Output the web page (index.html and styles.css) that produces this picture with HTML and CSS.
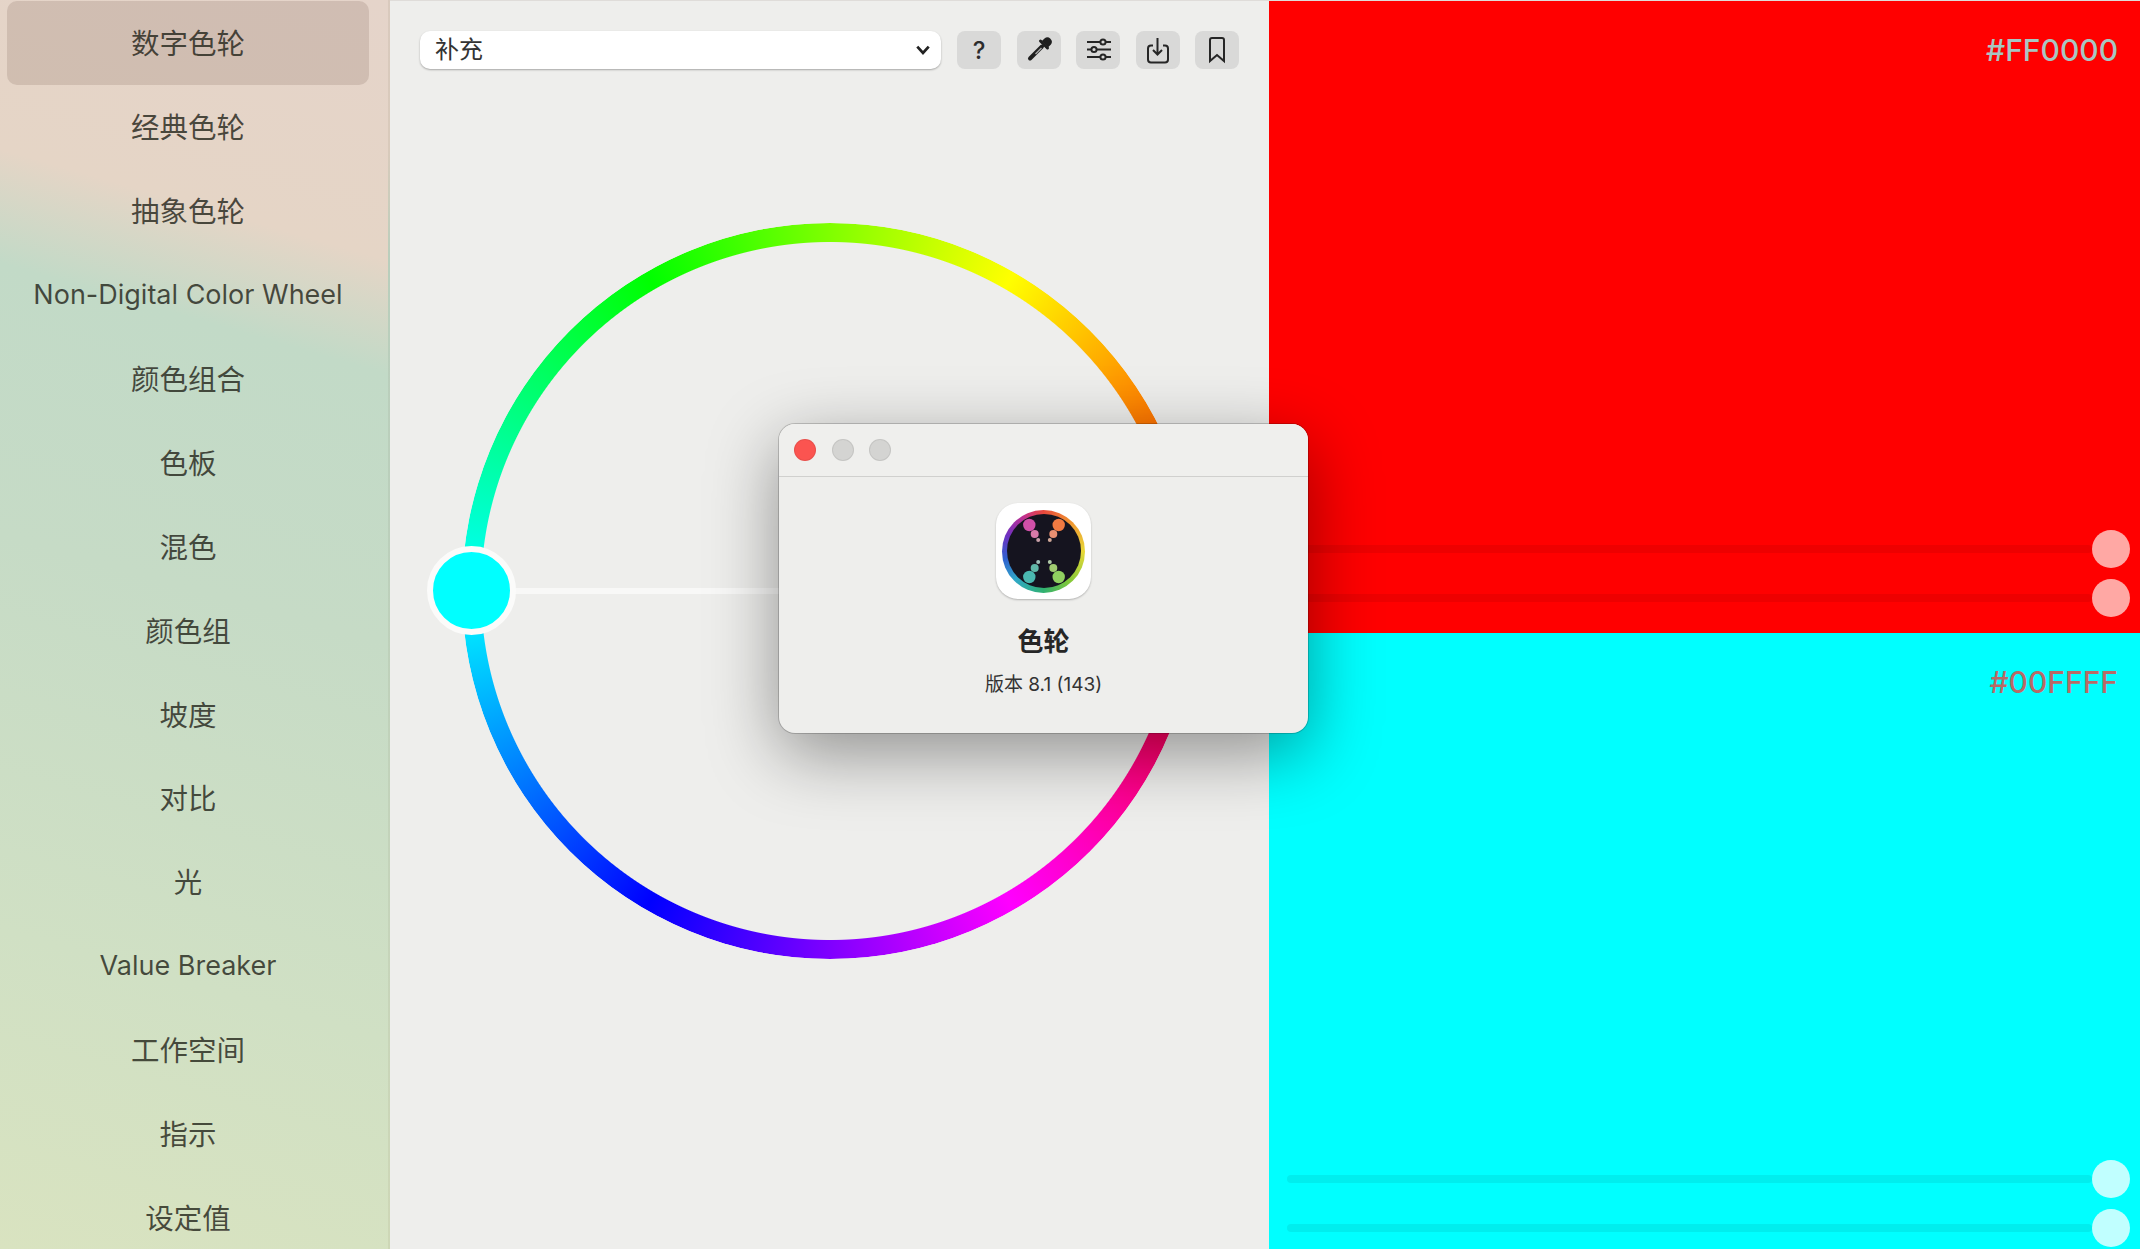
FILE: index.html
```html
<!DOCTYPE html>
<html lang="zh-CN">
<head>
  <meta charset="UTF-8" />
  <title>色轮</title>
  <link rel="stylesheet" href="styles.css">
</head>
<body>
  <div class="app">
    <nav class="sidebar">
      <a class="nav-item active">数字色轮</a>
      <a class="nav-item">经典色轮</a>
      <a class="nav-item">抽象色轮</a>
      <a class="nav-item latin">Non-Digital Color Wheel</a>
      <a class="nav-item">颜色组合</a>
      <a class="nav-item">色板</a>
      <a class="nav-item">混色</a>
      <a class="nav-item">颜色组</a>
      <a class="nav-item">坡度</a>
      <a class="nav-item">对比</a>
      <a class="nav-item">光</a>
      <a class="nav-item latin">Value Breaker</a>
      <a class="nav-item">工作空间</a>
      <a class="nav-item">指示</a>
      <a class="nav-item">设定值</a>
    </nav>

    <main class="main">
      <div class="toolbar">
        <div class="select-wrap">
          <select class="mode-select">
            <option>补充</option>
          </select>
          <svg class="chevron" viewBox="0 0 14 10"><path d="M2 2l5 5.5L12 2" /></svg>
        </div>
        <button class="tool-btn">?</button>
        <button class="tool-btn">
          <svg viewBox="0 0 44 38">
            <path class="fill" d="M27.5 7.5a4.4 4.4 0 0 1 6.2 6.2l-2.6 2.6-6.2-6.2z" />
            <path class="thick" d="M23.5 10l7 7" />
            <path class="stem" d="M25 15.5L13 27.5" />
            <path class="stem-in" d="M24.5 17l-6 6" />
          </svg>
        </button>
        <button class="tool-btn">
          <svg viewBox="0 0 44 38">
            <path class="line" d="M11 11h24M11 18.5h24M11 26h24" />
            <circle class="knob-ico" cx="27" cy="11" r="2.6" />
            <circle class="knob-ico" cx="18" cy="18.5" r="2.6" />
            <circle class="knob-ico" cx="27" cy="26" r="2.6" />
          </svg>
        </button>
        <button class="tool-btn">
          <svg viewBox="0 0 44 38">
            <path class="line" d="M17 14.5h-2a3 3 0 0 0-3 3v11a3 3 0 0 0 3 3h14a3 3 0 0 0 3-3v-11a3 3 0 0 0-3-3h-2" />
            <path class="line" d="M21.5 7v16.5M17 19l4.5 4.5L26 19" />
          </svg>
        </button>
        <button class="tool-btn">
          <svg viewBox="0 0 44 38">
            <path class="line" d="M15 30V9a2 2 0 0 1 2-2h10a2 2 0 0 1 2 2v21l-7-6z" />
          </svg>
        </button>
      </div>

      <div class="wheel">
        <div class="wheel-ring"></div>
        <div class="wheel-line"></div>
        <div class="wheel-knob"></div>
      </div>
    </main>

    <section class="swatches">
      <div class="swatch swatch-red">
        <div class="hex">#FF0000</div>
        <div class="sliders">
          <div class="slider"><div class="track"></div><div class="thumb"></div></div>
          <div class="slider"><div class="track"></div><div class="thumb"></div></div>
        </div>
      </div>
      <div class="swatch swatch-cyan">
        <div class="hex">#00FFFF</div>
        <div class="sliders">
          <div class="slider"><div class="track"></div><div class="thumb"></div></div>
          <div class="slider"><div class="track"></div><div class="thumb"></div></div>
        </div>
      </div>
    </section>

    <!-- About window -->
    <div class="about">
      <div class="titlebar">
        <span class="light light-close"></span>
        <span class="light"></span>
        <span class="light"></span>
      </div>
      <div class="about-body">
        <div class="app-icon">
          <div class="icon-ring">
            <svg class="icon-disc" viewBox="0 0 74 74">
              <circle cx="37" cy="37" r="37" fill="#15141f" />
              <circle cx="22.3" cy="11" r="6.2" fill="#d050a8" />
              <circle cx="51.7" cy="11" r="6.2" fill="#f07a42" />
              <circle cx="27.7" cy="20" r="4" fill="#d87aa8" />
              <circle cx="46.3" cy="20" r="4" fill="#e89072" />
              <circle cx="31.2" cy="26" r="2" fill="#c8a0a8" />
              <circle cx="42.8" cy="26" r="2" fill="#d0a898" />
              <circle cx="31.2" cy="48" r="2" fill="#9fc0b8" />
              <circle cx="42.8" cy="48" r="2" fill="#b0c8a8" />
              <circle cx="27.7" cy="54" r="4" fill="#60b8a8" />
              <circle cx="46.3" cy="54" r="4" fill="#a0cc70" />
              <circle cx="22.3" cy="63" r="6.2" fill="#4ab8b0" />
              <circle cx="51.7" cy="63" r="6.2" fill="#90d060" />
            </svg>
          </div>
        </div>
        <div class="about-name">色轮</div>
        <div class="about-version">版本 8.1 (143)</div>
      </div>
    </div>
  </div>
</body>
</html>
```

FILE: styles.css
```css
* {
  box-sizing: border-box;
}

html, body {
  margin: 0;
  height: 100%;
  overflow: hidden;
}

body {
  font-family: Inter, "Noto Sans CJK SC", sans-serif;
  background: #eeeeec;
}

.app {
  position: relative;
  display: flex;
  height: 1249px;
  overflow: hidden;
}

/* Sidebar */
.sidebar {
  width: 390px;
  flex-shrink: 0;
  padding: 1px 19px 0 7px;
  border-right: 2px solid rgba(0, 0, 0, 0.05);
  background: linear-gradient(196deg, #e5d4ca 0, #e5d5c6 250px, #c2dac7 360px, #c6dbc6 620px, #d0e0c4 1000px, #d9e3c0 1308px);
  overflow: hidden;
}

.nav-item {
  display: flex;
  align-items: center;
  justify-content: center;
  height: 83.9px;
  padding-bottom: 2px;
  font-size: 28.5px;
  color: rgba(30, 32, 22, 0.78);
  white-space: nowrap;
}

.nav-item.latin {
  padding-bottom: 0;
  font-size: 27px;
}

.nav-item.active {
  background: rgba(90, 60, 50, 0.15);
  border-radius: 10px;
}

/* Wheel panel */
.main {
  width: 879px;
  flex-shrink: 0;
  border-top: 1px solid #dfdcd9;
  background: #eeeeec;
}

.toolbar {
  display: flex;
  align-items: center;
  gap: 15.5px;
  height: 38px;
  margin: 30px 0 0 30px;
}

.select-wrap {
  position: relative;
  width: 521px;
  height: 38px;
  margin-right: 0.5px;
}

.mode-select {
  width: 100%;
  height: 100%;
  padding: 0 15px 2px;
  font-family: inherit;
  font-size: 24px;
  color: #333;
  background: #fff;
  border: none;
  border-radius: 10px;
  box-shadow: 0 1px 2px rgba(0, 0, 0, 0.3);
  appearance: none;
  -webkit-appearance: none;
}

.chevron {
  position: absolute;
  top: 13px;
  right: 10px;
  width: 16px;
  height: 12px;
  fill: none;
  stroke: #222;
  stroke-width: 2.4;
}

.tool-btn {
  display: flex;
  align-items: center;
  justify-content: center;
  width: 44px;
  height: 38px;
  padding: 0;
  font-family: inherit;
  font-size: 24px;
  font-weight: 500;
  color: #2c2c2c;
  background: #d9d9d8;
  border: none;
  border-radius: 8px;
}

.tool-btn svg {
  display: block;
  width: 44px;
  height: 38px;
}

.line {
  fill: none;
  stroke: #262626;
  stroke-width: 2;
}

.fill {
  fill: #1f1f1f;
}

.thick {
  stroke: #1f1f1f;
  stroke-width: 3;
  stroke-linecap: round;
}

.stem {
  stroke: #1f1f1f;
  stroke-width: 4;
  stroke-linecap: round;
}

.stem-in {
  stroke: #a8a8a8;
  stroke-width: 1.5;
}

.knob-ico {
  fill: #d9d9d8;
  stroke: #262626;
  stroke-width: 2;
}

.wheel {
  position: relative;
  width: 736px;
  height: 736px;
  margin: 154px 0 0 72px;
}

.wheel-ring {
  width: 100%;
  height: 100%;
  border-radius: 50%;
  background: conic-gradient(hsl(90, 100%, 50%), hsl(60, 100%, 50%) 30deg, hsl(0, 100%, 50%) 90deg, hsl(300, 100%, 50%) 150deg, hsl(240, 100%, 50%) 210deg, hsl(180, 100%, 50%) 270deg, hsl(120, 100%, 50%) 330deg, hsl(90, 100%, 50%) 360deg);
  -webkit-mask: radial-gradient(circle closest-side, transparent 348.5px, #000 349.5px);
  mask: radial-gradient(circle closest-side, transparent 348.5px, #000 349.5px);
}

.wheel-line {
  position: absolute;
  left: 50px;
  top: 365px;
  width: 318px;
  height: 6px;
  background: #f8f8f7;
}

.wheel-knob {
  position: absolute;
  left: -35px;
  top: 323px;
  width: 89px;
  height: 89px;
  background: #00ffff;
  border: 6px solid #fbfbfa;
  border-radius: 50%;
}

/* Colour swatches */
.swatches {
  display: flex;
  flex-direction: column;
  flex: 1;
  height: 1263px;
  border-top: 1px solid #dfdcd9;
}

.swatch {
  display: flex;
  flex-direction: column;
  flex: 1;
  padding: 30px 10px 11px 18px;
}

.swatch-red {
  flex: 0 0 632px;
  background: #ff0000;
}

.swatch-red .hex {
  color: #a8c6c2;
}

.swatch-red .track {
  background: #ee0000;
}

.swatch-red .thumb {
  background: #ffa8a4;
}

.swatch-cyan {
  background: #00ffff;
}

.swatch-cyan .hex {
  color: #b86a66;
}

.swatch-cyan .track {
  background: #00eeee;
}

.swatch-cyan .thumb {
  background: #c0ffff;
}

.hex {
  padding-right: 12px;
  font-size: 30px;
  font-weight: 500;
  line-height: 38px;
  text-align: right;
}

.sliders {
  margin-top: auto;
}

.slider {
  display: flex;
  align-items: center;
  height: 49px;
}

.track {
  flex: 1;
  height: 8px;
  border-radius: 4px;
}

.thumb {
  width: 38px;
  height: 38px;
  flex-shrink: 0;
  border-radius: 50%;
}

/* About window */
.about {
  position: absolute;
  left: 779px;
  top: 424px;
  width: 529px;
  height: 309px;
  background: #eeeeec;
  border-radius: 16px;
  box-shadow: 0 0 0 1px rgba(0, 0, 0, 0.18), 0 20px 70px rgba(0, 0, 0, 0.4);
}

.titlebar {
  display: flex;
  align-items: center;
  gap: 15.5px;
  height: 53px;
  padding-left: 15px;
  border-bottom: 1px solid #d0d0ce;
  background: #efefed;
  border-radius: 16px 16px 0 0;
}

.light {
  width: 22px;
  height: 22px;
  background: #d4d4d2;
  border: 1px solid rgba(0, 0, 0, 0.07);
  border-radius: 50%;
}

.light-close {
  background: #fb5450;
}

.about-body {
  display: flex;
  flex-direction: column;
  align-items: center;
  padding-top: 26px;
}

.app-icon {
  display: flex;
  align-items: center;
  justify-content: center;
  width: 95px;
  height: 96px;
  background: #fff;
  border-radius: 22px;
  box-shadow: 0 1px 2px rgba(0, 0, 0, 0.25);
}

.icon-ring {
  display: flex;
  align-items: center;
  justify-content: center;
  width: 83px;
  height: 83px;
  border-radius: 50%;
  background: conic-gradient(#e8483c, #f09030 40deg, #e8d838 90deg, #80c838 140deg, #30b070 180deg, #30a8c8 225deg, #3060d0 260deg, #7030c0 295deg, #c03090 330deg, #e8483c);
}

.icon-disc {
  display: block;
  width: 74px;
  height: 74px;
}

.about-name {
  margin-top: 26px;
  font-size: 26px;
  font-weight: 700;
  line-height: 34px;
  color: #262626;
}

.about-version {
  margin-top: 14px;
  font-size: 19px;
  line-height: 24px;
  color: #333;
}
```
